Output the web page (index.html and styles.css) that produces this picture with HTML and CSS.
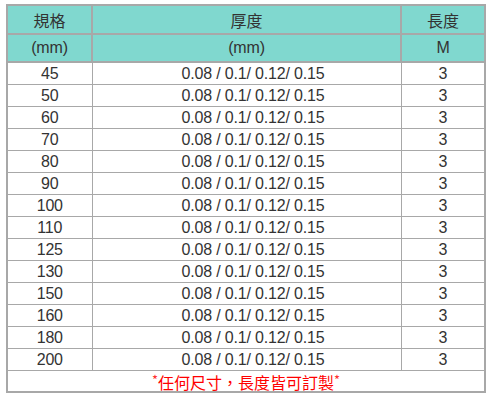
FILE: index.html
```html
<!DOCTYPE html>
<html lang="zh-Hant">
<head>
<meta charset="utf-8">
<title>規格表</title>
<link rel="stylesheet" href="styles.css">
</head>
<body>
<table class="spec">
  <colgroup>
    <col class="c1">
    <col class="c2">
    <col class="c3">
  </colgroup>
  <thead>
    <tr class="h1"><th>規格</th><th>厚度</th><th>長度</th></tr>
    <tr class="h2"><th>(mm)</th><th>(mm)</th><th>M</th></tr>
  </thead>
  <tbody>
    <tr><td>45</td><td class="thick">0.08 / 0.1/ 0.12/ 0.15</td><td>3</td></tr>
    <tr><td>50</td><td class="thick">0.08 / 0.1/ 0.12/ 0.15</td><td>3</td></tr>
    <tr><td>60</td><td class="thick">0.08 / 0.1/ 0.12/ 0.15</td><td>3</td></tr>
    <tr><td>70</td><td class="thick">0.08 / 0.1/ 0.12/ 0.15</td><td>3</td></tr>
    <tr><td>80</td><td class="thick">0.08 / 0.1/ 0.12/ 0.15</td><td>3</td></tr>
    <tr><td>90</td><td class="thick">0.08 / 0.1/ 0.12/ 0.15</td><td>3</td></tr>
    <tr><td>100</td><td class="thick">0.08 / 0.1/ 0.12/ 0.15</td><td>3</td></tr>
    <tr><td>110</td><td class="thick">0.08 / 0.1/ 0.12/ 0.15</td><td>3</td></tr>
    <tr><td>125</td><td class="thick">0.08 / 0.1/ 0.12/ 0.15</td><td>3</td></tr>
    <tr><td>130</td><td class="thick">0.08 / 0.1/ 0.12/ 0.15</td><td>3</td></tr>
    <tr><td>150</td><td class="thick">0.08 / 0.1/ 0.12/ 0.15</td><td>3</td></tr>
    <tr><td>160</td><td class="thick">0.08 / 0.1/ 0.12/ 0.15</td><td>3</td></tr>
    <tr><td>180</td><td class="thick">0.08 / 0.1/ 0.12/ 0.15</td><td>3</td></tr>
    <tr><td>200</td><td class="thick">0.08 / 0.1/ 0.12/ 0.15</td><td>3</td></tr>
    <tr class="note"><td colspan="3"><span class="ast">*</span>任何尺寸，長度皆可訂製<span class="ast">*</span></td></tr>
  </tbody>
</table>
</body>
</html>
```

FILE: styles.css
```css
html, body {
  margin: 0;
  padding: 0;
  background: #ffffff;
}

body {
  padding: 4px 0 0 6px;
  font-family: "Liberation Sans", Arial, "Noto Sans CJK TC", sans-serif;
  font-size: 16px;
  letter-spacing: -0.17px;
  color: #333333;
}

.spec {
  border-collapse: collapse;
  border: 2px solid #a8a8a8;
  width: 480px;
  table-layout: fixed;
}

.c1 { width: 85px; }
.c2 { width: 309px; }
.c3 { width: 84px; }

.spec th,
.spec td {
  padding: 0;
  text-align: center;
  vertical-align: middle;
  line-height: 18px;
}

.spec th {
  background: #80d8cf;
  font-weight: normal;
  border: 2px solid #a8a8a8;
}

.spec .h1 th {
  height: 27px;
  font-family: "Noto Sans CJK TC", sans-serif;
  font-size: 16px;
  letter-spacing: 0;
}

.spec .h2 th {
  height: 26px;
}

.spec td {
  border: 1px solid #a8a8a8;
  height: 21px;
}

.spec td.thick {
  padding-left: 13px;
}

.spec .note td {
  height: 20px;
  color: #ff0000;
  font-family: "Noto Sans CJK TC", sans-serif;
  font-size: 16px;
  letter-spacing: 0;
}

.ast {
  font-size: 13px;
  vertical-align: 4px;
  color: #ff3030;
}
```
